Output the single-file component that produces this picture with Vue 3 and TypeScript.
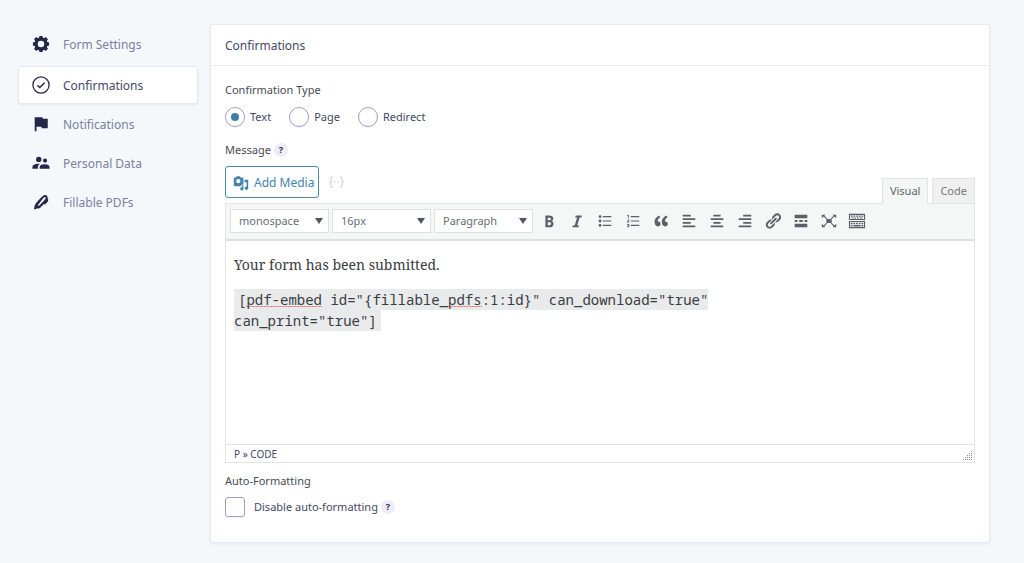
<script setup lang="ts">
import { ref } from 'vue'

interface NavItem {
  label: string
  icon: string
}

const navItems: NavItem[] = [
  { label: 'Form Settings', icon: 'gear' },
  { label: 'Confirmations', icon: 'check' },
  { label: 'Notifications', icon: 'flag' },
  { label: 'Personal Data', icon: 'people' },
  { label: 'Fillable PDFs', icon: 'pen' },
]
const active = ref('Confirmations')

const types: string[] = ['Text', 'Page', 'Redirect']
const confirmationType = ref('Text')

const fontFamily = ref('monospace')
const fontSize = ref('16px')
const blockFormat = ref('Paragraph')
const mode = ref('Visual')
const disableFormatting = ref(false)

interface Tool {
  name: string
  path: string
}

const tools: Tool[] = [
  { name: 'Bold', path: 'M6 4v13h4.54c1.37 0 2.46-.33 3.26-1 .8-.66 1.2-1.58 1.2-2.77 0-.84-.17-1.51-.51-2.01s-.9-.85-1.67-1.03v-.09c.57-.1 1.02-.4 1.36-.9s.51-1.13.51-1.91c0-1.14-.39-1.98-1.17-2.5C12.75 4.26 11.5 4 9.78 4H6zm2.57 5.15V6.26h1.36c.73 0 1.27.11 1.61.32.34.22.51.58.51 1.07 0 .54-.16.92-.47 1.15s-.82.35-1.51.35h-1.5zm0 2.19h1.6c1.44 0 2.16.53 2.16 1.61 0 .6-.17 1.05-.51 1.34s-.86.43-1.57.43H8.57v-3.38z' },
  { name: 'Italic', path: 'M15.500 4l-.5 2h-2.100l-2.700 9h2.100l-.6 2H4.700l.6-2h2.100l2.700-9H8l.6-2z' },
  { name: 'Bulleted list', path: 'M4.500 3.500a1.600 1.600 0 1 0 0 3.200a1.600 1.600 0 0 0 0-3.200zM7.500 4.500H17v1.200H7.500zM4.500 8.400a1.600 1.600 0 1 0 0 3.200a1.600 1.600 0 0 0 0-3.200zM7.500 9.400H17v1.200H7.500zM4.500 13.300a1.600 1.600 0 1 0 0 3.200a1.600 1.600 0 0 0 0-3.200zM7.500 14.300H17v1.200H7.500z' },
  { name: 'Numbered list', path: 'M7.500 4.500H17v1.200H7.500zM7.500 9.400H17v1.200H7.500zM7.500 14.300H17v1.200H7.500zM4.300 3h1v3.600h-1V4.200l-.9.300v-.8zM3.400 8.300h2.400v1.900l-1.300.8h1.300v.8H3.300v-1.300l1.500-1V9H3.400zM3.400 13.300h2.400V17H3.400v-.8h1.400v-.6H3.800v-.8h1v-.6H3.400z' },
  { name: 'Blockquote', path: 'M9.490 13.220c0-.74-.2-1.380-.61-1.900-.62-.78-1.830-.88-2.530-.72-.29-1.650 1.110-3.750 2.920-4.650L7.880 4c-2.730 1.300-5.420 4.280-4.960 8.050C3.210 14.430 4.590 16 6.540 16c.85 0 1.560-.25 2.120-.75s.83-1.180.83-2.030zm8.050 0c0-.74-.2-1.380-.61-1.900-.63-.78-1.830-.88-2.530-.72-.29-1.650 1.110-3.750 2.920-4.650L15.930 4c-2.730 1.300-5.410 4.280-4.950 8.050.29 2.380 1.660 3.950 3.610 3.950.85 0 1.560-.25 2.120-.75s.83-1.180.83-2.030z' },
  { name: 'Align left', path: 'M12 5V3H3v2h9zm5 4V7H3v2h14zm-5 4v-2H3v2h9zm5 4v-2H3v2h14z' },
  { name: 'Align center', path: 'M14 5V3H6v2h8zm3 4V7H3v2h14zm-3 4v-2H6v2h8zm3 4v-2H3v2h14z' },
  { name: 'Align right', path: 'M17 5V3H8v2h9zm0 4V7H3v2h14zm0 4v-2H8v2h9zm0 4v-2H3v2h14z' },
  { name: 'Insert link', path: 'M17.740 2.760c1.680 1.690 1.680 4.410 0 6.100l-1.530 1.520c-1.120 1.120-2.700 1.470-4.140 1.090l2.620-2.610.76-.77.76-.76c.84-.84.84-2.200 0-3.040-.84-.85-2.200-.85-3.040 0l-.77.76-3.380 3.380c-.37-1.440-.02-3.020 1.100-4.140l1.520-1.530c1.690-1.680 4.420-1.680 6.100 0zM8.590 13.430l5.340-5.340c.42-.42.42-1.100 0-1.520-.44-.43-1.130-.39-1.530 0l-5.330 5.340c-.42.42-.42 1.100 0 1.520.44.43 1.130.39 1.520 0zm-.76 2.290l4.140-4.150c.38 1.440.03 3.020-1.090 4.140l-1.520 1.530c-1.690 1.680-4.410 1.680-6.100 0-1.680-1.680-1.680-4.420 0-6.100l1.530-1.520c1.120-1.120 2.700-1.470 4.140-1.100l-4.140 4.150c-.85.84-.85 2.200 0 3.050.84.84 2.200.84 3.040 0z' },
  { name: 'Read more', path: 'M17 7V3H3v4h14zM6 11V9H3v2h3zm6 0V9H8v2h4zm5 0V9h-3v2h3zm0 6v-4H3v4h14z' },
  { name: 'Fullscreen', path: 'M7 7.800h6v4.400H7zM2 3h4L4.900 4.100 8 7.200l-.8.800L4 5.100 2 7zM18 3v4l-2-1.900L12.800 8l-.8-.8 3.100-3.100L14 3zM2 17v-4l2 1.900L7.200 12l.8.800-3.100 3.100L6 17zM18 17h-4l1.100-1.100L12 12.800l.8-.8 3.200 2.900 2-1.900z' },
  { name: 'Toolbar toggle', path: 'M1 2h18v7H1zM2.200 3.200v4.600h15.600V3.200zM3 4h2v1.200H3zM6 4h2v1.200H6zM9 4h2v1.200H9zM12 4h2v1.200h-2zM15 4h2v1.200h-2zM4 6h2v1.200H4zM7 6h2v1.200H7zM10 6h2v1.200h-2zM13 6h3v1.200h-3zM1 10h18v8H1zM2.200 11.200v5.600h15.600v-5.600zM3 12h2v1.500H3zM6 12h2v1.500H6zM9 12h2v1.500H9zM12 12h2v1.500h-2zM15 12h2v1.500h-2zM3 14.500h2V16H3zM6 14.500h8V16H6zM15 14.500h2V16h-2z' },
]
</script>

<template>
  <div class="page">
    <nav class="sidebar" aria-label="Form settings">
      <a
        v-for="item in navItems"
        :key="item.label"
        href="#"
        class="nav-item"
        :class="{ active: active === item.label }"
        @click.prevent="active = item.label"
      >
        <svg v-if="item.icon === 'gear'" class="nav-icon" viewBox="0 0 20 20">
          <path fill="currentColor" fill-rule="evenodd" d="M8.300 1h3.400l.5 2 1.200.5 2-1.200 2.300 2.300-1.200 2 .5 1.200 2 .5v3.400l-2 .5-.5 1.200 1.200 2-2.300 2.300-2-1.200-1.200.5-.5 2H8.300l-.5-2-1.200-.5-2 1.200-2.300-2.300 1.200-2-.5-1.200-2-.5V8.300l2-.5.5-1.200-1.200-2 2.300-2.300 2 1.200 1.200-.5zM10 6.400a3.600 3.600 0 1 0 0 7.200a3.600 3.600 0 0 0 0-7.200z" />
        </svg>
        <svg v-else-if="item.icon === 'check'" class="nav-icon" viewBox="0 0 20 20" fill="none" stroke="currentColor">
          <circle cx="10" cy="10" r="9" stroke-width="1.400" />
          <path d="M6 10.200l2.700 2.600 5.300-5.300" stroke-width="1.700" />
        </svg>
        <svg v-else-if="item.icon === 'flag'" class="nav-icon" viewBox="0 0 20 20">
          <path fill="currentColor" d="M3 2.500h8.500l.6 1.700h5.400v10.500h-6.600l-.6-1.700H5v5H3z" />
        </svg>
        <svg v-else-if="item.icon === 'people'" class="nav-icon" viewBox="0 0 20 20">
          <path fill="currentColor" d="M7.500 3a3 3 0 1 1 0 6a3 3 0 0 1 0-6zM14.500 5a2.300 2.300 0 1 1 0 4.600a2.300 2.300 0 0 1 0-4.600zM9 10.800c-1.900 1-2.600 2.500-2.600 5.700H.5v-2.200c0-2.400 3.500-3.900 8.500-3.500zM14 11.500c3.600 0 5.500 1.300 5.500 3.100v1.900h-11v-1.900c0-1.800 2-3.100 5.500-3.100z" />
        </svg>
        <svg v-else class="nav-icon" viewBox="0 0 20 20">
          <path fill="currentColor" fill-rule="evenodd" d="M2.200 17.800l.8-3.800c.7-2.400 7.500-9.700 9.800-11.200 1.700-1.100 4.400-.2 4.500 1.800l-.1 1.200.8.900-.1 2.600-3.300 3.600-1.300-.7-4.200 4.100c-1.400.8-2.600.8-4 1l-1.500 1.100zM6.500 13.500l1.100 1L14.700 7l.6-1.700-1-.8-1.500.8z" />
        </svg>
        <span>{{ item.label }}</span>
      </a>
    </nav>

    <main class="card">
      <h1 class="card-title">Confirmations</h1>
      <form class="card-body" @submit.prevent>
        <fieldset class="types">
          <legend class="label">Confirmation Type</legend>
          <div class="radio-row">
            <label v-for="type in types" :key="type" class="choice">
              <input v-model="confirmationType" class="radio" type="radio" name="type" :value="type" />
              <span>{{ type }}</span>
            </label>
          </div>
        </fieldset>

        <div class="label message-label">
          <span id="message-label">Message</span>
          <button type="button" class="help" aria-label="Help with the message">?</button>
        </div>

        <div class="editor-head">
          <button type="button" class="media">
            <svg class="media-icon" viewBox="0 0 20 20">
              <path fill="currentColor" fill-rule="evenodd" d="M3.500 3l1-1.500h4L9.500 3H12c.6 0 1 .4 1 1v8c-2 .1-3.200 1.200-3.200 2H2c-.6 0-1-.4-1-1V4c0-.6.400-1 1-1zM6.600 5a2.700 2.700 0 1 0 0 5.400a2.700 2.700 0 0 0 0-5.400zM14.300 6H19v10.500a2.200 2.200 0 1 1-2-2.200V9h-2.700zM13 12.800v4.600a2 2 0 1 1-1.700-2v-2.600z" />
            </svg>
            <span>Add Media</span>
          </button>
          <button type="button" class="merge" aria-label="Insert merge tag">
            <svg viewBox="0 0 20 16" fill="none" stroke="currentColor" stroke-width="1.500">
              <path d="M6 2H5Q3.500 2 3.500 3.500v2.700Q3.500 8 1.500 8q2 0 2 1.800v2.700Q3.500 14 5 14h1M14 2h1q1.500 0 1.500 1.500v2.700q0 1.800 2 1.800-2 0-2 1.800v2.700q0 1.500-1.500 1.500h-1" />
              <path d="M7 8h1.800M11.200 8H13" />
            </svg>
          </button>
          <div class="tabs">
            <button
              v-for="tab in ['Visual', 'Code']"
              :key="tab"
              type="button"
              class="tab"
              :class="{ current: mode === tab }"
              @click="mode = tab"
            >{{ tab }}</button>
          </div>
        </div>

        <section class="editor">
          <div class="toolbar">
            <div class="selects">
              <select v-model="fontFamily" aria-label="Font family">
                <option>monospace</option>
                <option>serif</option>
              </select>
              <select v-model="fontSize" aria-label="Font size">
                <option>16px</option>
                <option>18px</option>
              </select>
              <select v-model="blockFormat" aria-label="Block format">
                <option>Paragraph</option>
                <option>Heading 1</option>
              </select>
            </div>
            <button v-for="tool in tools" :key="tool.name" type="button" class="tool" :aria-label="tool.name">
              <svg viewBox="0 0 20 20"><path fill="currentColor" fill-rule="evenodd" :d="tool.path" /></svg>
            </button>
          </div>
          <div class="content" contenteditable="true" spellcheck="false" role="textbox" aria-multiline="true" aria-labelledby="message-label">
            <p>Your form has been submitted.</p>
            <p><code>[<span class="misspelt">pdf-embed</span> id="{fillable_<span class="misspelt">pdfs</span>:1:id}" can_download="true" can_print="true"]</code></p>
          </div>
          <div class="status">
            <span>P » CODE</span>
            <svg class="grip" viewBox="0 0 9 9" fill="#8f8f93">
              <path d="M8 0h1v1H8zM8 2h1v1H8zM6 2h1v1H6zM8 4h1v1H8zM6 4h1v1H6zM4 4h1v1H4zM8 6h1v1H8zM6 6h1v1H6zM4 6h1v1H4zM2 6h1v1H2zM0 8h1v1H0zM2 8h1v1H2zM4 8h1v1H4zM6 8h1v1H6zM8 8h1v1H8z" />
            </svg>
          </div>
        </section>

        <div class="label format-label">Auto-Formatting</div>
        <div class="format-row">
          <label class="choice check-choice">
            <input v-model="disableFormatting" class="checkbox" type="checkbox" />
            <span>Disable auto-formatting</span>
          </label>
          <button type="button" class="help" aria-label="Help with auto-formatting">?</button>
        </div>
      </form>
    </main>
  </div>
</template>

<style>
body {
  margin: 0;
  background: #f4f8fb;
}
</style>

<style scoped>
* {
  box-sizing: border-box;
}

button,
select,
input {
  font: inherit;
  margin: 0;
}

.page {
  display: grid;
  grid-template-columns: 180px minmax(0, 1fr);
  gap: 12px;
  align-items: start;
  min-height: 100vh;
  padding: 24px 34px 19px 18px;
  background: #f4f8fb;
  color: #454869;
  font-family: "Noto Sans", sans-serif;
  font-size: 12px;
  line-height: 20px;
}

.sidebar {
  display: flex;
  flex-direction: column;
  gap: 1px;
  padding-top: 1px;
}

.nav-item {
  display: flex;
  align-items: center;
  gap: 13px;
  height: 38px;
  padding: 0 13px;
  border: 1px solid transparent;
  border-radius: 3px;
  color: #7c7fa2;
  text-decoration: none;
}

.nav-item.active {
  margin-top: 2px;
  background: #fff;
  border-color: #e6e8f3;
  box-shadow: 0 1px 2px rgba(40, 50, 90, 0.08);
  color: #454869;
}

.nav-icon {
  width: 18px;
  height: 18px;
  color: #242748;
}

.nav-item span {
  padding-top: 1px;
}

.card {
  background: #fff;
  border: 1px solid #e6e9f3;
  border-radius: 3px;
  box-shadow: 0 1px 3px rgba(40, 50, 90, 0.08);
}

.card-title {
  margin: 0;
  padding: 11px 14px 9px;
  border-bottom: 1px solid #e8eaf1;
  font-size: 12px;
  font-weight: 400;
}

.card-body {
  padding: 14px 14px 25px;
}

.types {
  margin: 0;
  padding: 0;
  border: 0;
}

.label {
  padding: 0;
  color: #484b55;
  font-size: 11px;
}

.radio-row {
  display: flex;
  gap: 18px;
  padding-top: 7px;
}

.choice {
  display: flex;
  align-items: center;
  gap: 5px;
  font-size: 11px;
}

.radio,
.checkbox {
  appearance: none;
  display: grid;
  place-items: center;
  width: 20px;
  height: 20px;
  background: #fff;
  border: 1px solid #9da0c6;
  box-shadow: 0 1px 1px rgba(40, 50, 90, 0.06);
}

.radio {
  border-radius: 50%;
}

.radio:checked::before {
  content: "";
  width: 8px;
  height: 8px;
  border-radius: 50%;
  background: #3e7da6;
}

.checkbox {
  border-radius: 3px;
}

.checkbox:checked::before {
  content: "✓";
}

.message-label {
  display: flex;
  align-items: center;
  gap: 3px;
  margin-top: 13px;
}

.help {
  display: grid;
  place-items: center;
  width: 14px;
  height: 14px;
  padding: 0;
  border: 0;
  border-radius: 50%;
  background: #ecedf8;
  color: #2c2f52;
  font-size: 9px;
  font-weight: 700;
  line-height: 14px;
}

.editor-head {
  display: flex;
  align-items: flex-start;
  gap: 9px;
  height: 38px;
  margin-top: 6px;
}

.media {
  display: flex;
  align-items: center;
  gap: 5px;
  height: 32px;
  padding: 2px 4px 0 7px;
  background: #fff;
  border: 1px solid #4a88b0;
  border-radius: 3px;
  color: #4583aa;
  font-size: 12px;
}

.media-icon {
  width: 16px;
  height: 16px;
}

.merge {
  display: grid;
  place-items: center;
  width: 17px;
  height: 32px;
  padding: 0;
  border: 0;
  background: none;
  color: #d3d5e3;
}

.merge svg {
  width: 17px;
  height: 14px;
}

.tabs {
  display: flex;
  align-self: flex-end;
  gap: 4px;
  margin-left: auto;
}

.tab {
  height: 26px;
  padding: 0 7px;
  background: #f0f0f0;
  border: 1px solid #e2e3e4;
  color: #75777c;
  font-size: 11px;
}

.tab.current {
  z-index: 1;
  background: #f5f6f6;
  border-bottom-color: #f5f6f6;
  color: #60636a;
}

.editor {
  margin-top: -1px;
  border: 1px solid #e2e3e4;
}

.toolbar {
  display: flex;
  flex-wrap: wrap;
  align-items: center;
  padding: 5px 4px 6px;
  background: #f5f6f6;
  border-bottom: 2px solid #dfe0e1;
}

.selects {
  display: flex;
  gap: 3px;
  margin-right: 2px;
}

select {
  appearance: none;
  width: 99px;
  height: 24px;
  padding: 0 8px;
  border: 1px solid #dfe1e3;
  border-radius: 0;
  background: #fff url("data:image/svg+xml,%3Csvg xmlns='http://www.w3.org/2000/svg' viewBox='0 0 8 6'%3E%3Cpath d='M0 0h8L4 6z' fill='%23505560'/%3E%3C/svg%3E") right 5px center / 8px 6px no-repeat;
  color: #6a6d74;
  font-size: 11px;
}

.tool {
  display: grid;
  place-items: center;
  width: 28px;
  height: 24px;
  padding: 0;
  border: 0;
  background: none;
  color: #5a5f68;
}

.tool svg {
  width: 18px;
  height: 18px;
}

.content {
  min-height: 203px;
  padding: 13px 8px;
  outline: none;
  color: #3a3d42;
  font-family: "Noto Serif", "Liberation Serif", serif;
  font-size: 14px;
  line-height: 21px;
}

.content p {
  max-width: 490px;
  margin: 0 0 14px;
}

.content code {
  padding: 1px 4px;
  background: #e9eaeb;
  font-family: "Noto Sans Mono", "DejaVu Sans Mono", monospace;
  font-size: 14px;
}

.misspelt {
  background: repeating-linear-gradient(90deg, #e88080 0 2px, #f0b4b4 2px 3px) left bottom 2px / 100% 1px no-repeat;
}

.status {
  display: flex;
  align-items: center;
  justify-content: space-between;
  height: 18px;
  padding: 0 2px 0 8px;
  border-top: 1px solid #e2e3e4;
  font-size: 10px;
}

.grip {
  align-self: flex-end;
  width: 9px;
  height: 9px;
  margin-bottom: 2px;
}

.format-label {
  margin-top: 8px;
}

.format-row {
  display: flex;
  align-items: center;
  gap: 3px;
  padding-top: 6px;
}

.check-choice {
  gap: 9px;
}
</style>
